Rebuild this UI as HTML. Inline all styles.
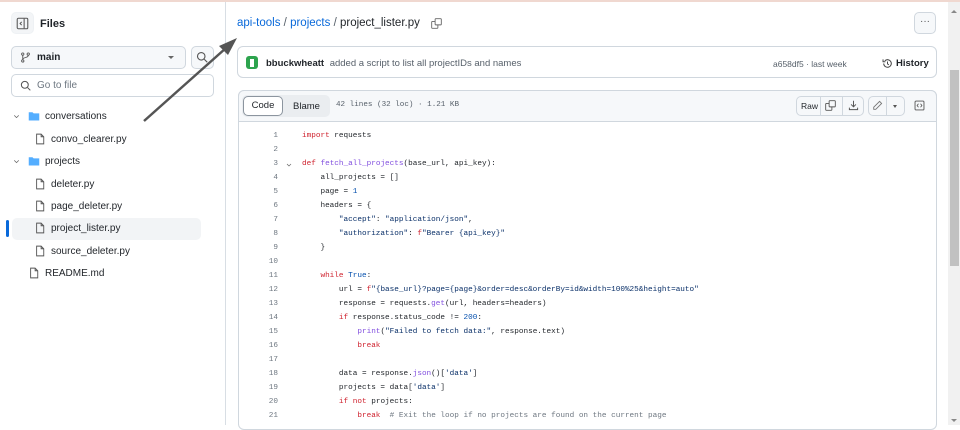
<!DOCTYPE html>
<html><head><meta charset="utf-8"><style>
*{box-sizing:border-box;margin:0;padding:0}
body{width:960px;height:425px;overflow:hidden;background:#fff;font-family:"Liberation Sans",sans-serif;color:#1f2328;position:relative}
.abs{position:absolute}
.topline{left:0;top:0;width:960px;height:2px;background:#f0d8d0}
.side{left:0;top:2px;width:226px;height:423px;border-right:1px solid #d8dee4}
.btn{border:1px solid #d0d7de;border-radius:5px;background:#f6f8fa}
.row{position:absolute;font-size:10px;color:#1f2328;height:22px;line-height:22px}
.mono{font-family:"Liberation Mono",monospace}
.code{font-family:"Liberation Mono",monospace;font-size:7.7px;white-space:pre;line-height:14px}
.ln{position:absolute;left:240px;width:38px;text-align:right;color:#6e7781}
.cl{position:absolute;left:302px;color:#1f2328}
.k{color:#cf222e}.f{color:#8250df}.c{color:#0550ae}.s{color:#0a3069}.cm{color:#6e7781}
</style></head><body>
<div class="abs topline"></div>
<div class="abs side"></div>
<div class="abs btn" style="left:11px;top:12px;width:23px;height:22px;border-color:#eef1f4;background:#f3f5f7"></div>
<svg class="abs" style="left:16px;top:17px" width="13" height="13" viewBox="0 0 16 16"><rect x="1.5" y="1.5" width="13" height="13" rx="1.5" fill="none" stroke="#555" stroke-width="1.3"/><line x1="10" y1="2" x2="10" y2="14" stroke="#555" stroke-width="1.3"/><path d="M7 6 L5 8 L7 10" fill="none" stroke="#555" stroke-width="1.2"/></svg>
<div class="abs" style="left:40px;top:18px;font-size:11px;font-weight:bold">Files</div>
<div class="abs btn" style="left:11px;top:46px;width:175px;height:23px"></div>
<svg class="abs" style="left:20px;top:52px" width="11" height="11" viewBox="0 0 16 16"><circle cx="4" cy="3" r="1.7" fill="none" stroke="#555" stroke-width="1.3"/><circle cx="4" cy="13" r="1.7" fill="none" stroke="#555" stroke-width="1.3"/><circle cx="12" cy="3" r="1.7" fill="none" stroke="#555" stroke-width="1.3"/><path d="M4 5v6M12 5c0 4-8 2-8 6" fill="none" stroke="#555" stroke-width="1.3"/></svg>
<div class="abs" style="left:37px;top:52px;font-size:10px;font-weight:bold">main</div>
<div class="abs" style="left:168px;top:56px;border:3px solid transparent;border-top:3px solid #666"></div>
<div class="abs btn" style="left:191px;top:46px;width:23px;height:23px"></div>
<svg class="abs" style="left:196px;top:51px" width="12" height="12" viewBox="0 0 16 16"><circle cx="7" cy="7" r="5" fill="none" stroke="#555" stroke-width="1.5"/><line x1="11" y1="11" x2="15" y2="15" stroke="#555" stroke-width="1.5"/></svg>
<div class="abs" style="left:11px;top:74px;width:203px;height:23px;border:1px solid #d0d7de;border-radius:5px"></div>
<svg class="abs" style="left:20px;top:80px" width="11" height="11" viewBox="0 0 16 16"><circle cx="7" cy="7" r="5" fill="none" stroke="#555" stroke-width="1.5"/><line x1="11" y1="11" x2="15" y2="15" stroke="#555" stroke-width="1.5"/></svg>
<div class="abs" style="left:37px;top:80px;font-size:10px;color:#6e7781">Go to file</div>
<div class="abs" style="left:12px;top:218px;width:189px;height:22px;background:#f2f4f6;border-radius:5px"></div>
<div class="abs" style="left:6px;top:220px;width:3px;height:17px;background:#0969da;border-radius:2px"></div>
<svg width="0" height="0" style="position:absolute"><defs>
<symbol id="fi" viewBox="0 0 16 16"><path d="M3.5 1.5h6l3.5 3.5v9.5h-9.5z M9.5 1.5v3.5h3.5" fill="none" stroke="#555" stroke-width="1.2"/></symbol>
<symbol id="fo" viewBox="0 0 16 16"><path d="M1 3h5l1.5 1.5H15V14H1z" fill="#54aeff"/></symbol>
<symbol id="ch" viewBox="0 0 16 16"><path d="M4 6l4 4 4-4" fill="none" stroke="#666" stroke-width="1.4"/></symbol>
</defs></svg>
<svg class="abs" style="left:12px;top:112px" width="9" height="9"><use href="#ch"/></svg>
<svg class="abs" style="left:28px;top:110px" width="12" height="12"><use href="#fo"/></svg>
<div class="row" style="left:45px;top:106px">conversations</div>
<svg class="abs" style="left:34px;top:133px" width="12" height="12"><use href="#fi"/></svg>
<div class="row" style="left:51px;top:129px">convo_clearer.py</div>
<svg class="abs" style="left:12px;top:157px" width="9" height="9"><use href="#ch"/></svg>
<svg class="abs" style="left:28px;top:155px" width="12" height="12"><use href="#fo"/></svg>
<div class="row" style="left:45px;top:151px">projects</div>
<svg class="abs" style="left:34px;top:178px" width="12" height="12"><use href="#fi"/></svg>
<div class="row" style="left:51px;top:174px">deleter.py</div>
<svg class="abs" style="left:34px;top:200px" width="12" height="12"><use href="#fi"/></svg>
<div class="row" style="left:51px;top:196px">page_deleter.py</div>
<svg class="abs" style="left:34px;top:222px" width="12" height="12"><use href="#fi"/></svg>
<div class="row" style="left:51px;top:218px">project_lister.py</div>
<svg class="abs" style="left:34px;top:245px" width="12" height="12"><use href="#fi"/></svg>
<div class="row" style="left:51px;top:241px">source_deleter.py</div>
<svg class="abs" style="left:28px;top:267px" width="12" height="12"><use href="#fi"/></svg>
<div class="row" style="left:45px;top:263px">README.md</div>
<div class="abs" style="left:237px;top:17px;font-size:11.5px"><span style="color:#0969da">api-tools</span> <span style="color:#57606a">/</span> <span style="color:#0969da">projects</span> <span style="color:#57606a">/</span> <span>project_lister.py</span></div>
<svg class="abs" style="left:431px;top:18px" width="11" height="11" viewBox="0 0 16 16"><rect x="1" y="5" width="9" height="10" rx="1" fill="none" stroke="#666" stroke-width="1.3"/><rect x="6" y="1" width="9" height="9" rx="1" fill="#fff" stroke="#666" stroke-width="1.3"/></svg>
<div class="abs btn" style="left:914px;top:12px;width:22px;height:22px;text-align:center;font-size:10px;line-height:18px;color:#555">···</div>
<div class="abs" style="left:237px;top:46px;width:700px;height:32px;border:1px solid #d0d7de;border-radius:6px"></div>
<div class="abs" style="left:246px;top:56px;width:12px;height:13px;background:#2da44e;border-radius:3px"></div>
<div class="abs" style="left:250px;top:59px;width:4px;height:8px;background:#fff"></div>
<div class="abs" style="left:266px;top:58px;font-size:9.5px"><b>bbuckwheatt</b> <span style="color:#57606a;margin-left:3px">added a script to list all projectIDs and names</span></div>
<div class="abs" style="left:773px;top:59px;font-size:8.5px;color:#57606a">a658df5 · last week</div>
<svg class="abs" style="left:882px;top:58px" width="11" height="11" viewBox="0 0 16 16"><path d="M2.5 8a5.5 5.5 0 1 0 1.6-3.9" fill="none" stroke="#444" stroke-width="1.5"/><path d="M1.5 2v3.5h3.5" fill="none" stroke="#444" stroke-width="1.4"/><path d="M8 5v3.5l2 1.5" fill="none" stroke="#444" stroke-width="1.4"/></svg>
<div class="abs" style="left:896px;top:58px;font-size:9.5px;font-weight:bold">History</div>
<div class="abs" style="left:238px;top:90px;width:699px;height:340px;border:1px solid #d0d7de;border-radius:6px"></div>
<div class="abs" style="left:238px;top:90px;width:699px;height:32px;background:#f6f8fa;border:1px solid #d0d7de;border-radius:6px 6px 0 0"></div>
<div class="abs" style="left:242px;top:95px;width:88px;height:22px;background:#eaedf0;border-radius:5px"></div>
<div class="abs" style="left:243px;top:96px;width:40px;height:20px;background:#fff;border:1px solid #8c959f;border-radius:5px;font-size:9.5px;text-align:center;line-height:18px">Code</div>
<div class="abs" style="left:293px;top:101px;font-size:9.5px;color:#1f2328">Blame</div>
<div class="abs mono" style="left:336px;top:101px;font-size:7.6px;color:#57606a">42 lines (32 loc) · 1.21 KB</div>
<div class="abs btn" style="left:796px;top:96px;width:68px;height:20px;background:#f6f8fa"></div>
<div class="abs" style="left:820px;top:96px;width:1px;height:20px;background:#d0d7de"></div>
<div class="abs" style="left:842px;top:96px;width:1px;height:20px;background:#d0d7de"></div>
<div class="abs" style="left:801px;top:101px;font-size:8.5px">Raw</div>
<svg class="abs" style="left:825px;top:100px" width="11" height="11" viewBox="0 0 16 16"><rect x="1" y="5" width="9" height="10" rx="1" fill="none" stroke="#555" stroke-width="1.3"/><rect x="6" y="1" width="9" height="9" rx="1" fill="#f6f8fa" stroke="#555" stroke-width="1.3"/></svg>
<svg class="abs" style="left:848px;top:100px" width="11" height="11" viewBox="0 0 16 16"><path d="M8 1v9M4.5 6.5L8 10l3.5-3.5M2 11v3h12v-3" fill="none" stroke="#555" stroke-width="1.4"/></svg>
<div class="abs btn" style="left:868px;top:96px;width:37px;height:20px"></div>
<div class="abs" style="left:886px;top:96px;width:1px;height:20px;background:#d0d7de"></div>
<svg class="abs" style="left:872px;top:100px" width="11" height="11" viewBox="0 0 16 16"><path d="M11 2l3 3-8.5 8.5H2.5v-3z" fill="none" stroke="#777" stroke-width="1.3"/></svg>
<div class="abs" style="left:893px;top:105px;border:2.5px solid transparent;border-top:3px solid #555"></div>
<svg class="abs" style="left:914px;top:100px" width="11" height="11" viewBox="0 0 16 16"><rect x="1.5" y="1.5" width="13" height="13" rx="1.5" fill="none" stroke="#555" stroke-width="1.3"/><path d="M6.5 5.5L4.5 8l2 2.5M9.5 5.5l2 2.5-2 2.5" fill="none" stroke="#555" stroke-width="1.2"/></svg>
<div class="code">
<div class="ln" style="top:129px">1</div><div class="cl" style="top:129px"><span class="k">import</span> requests</div>
<div class="ln" style="top:143px">2</div>
<div class="ln" style="top:157px">3</div><div class="cl" style="top:157px"><span class="k">def</span> <span class="f">fetch_all_projects</span>(base_url, api_key):</div>
<div class="ln" style="top:171px">4</div><div class="cl" style="top:171px">    all_projects = []</div>
<div class="ln" style="top:185px">5</div><div class="cl" style="top:185px">    page = <span class="c">1</span></div>
<div class="ln" style="top:199px">6</div><div class="cl" style="top:199px">    headers = {</div>
<div class="ln" style="top:213px">7</div><div class="cl" style="top:213px">        <span class="s">"accept"</span>: <span class="s">"application/json"</span>,</div>
<div class="ln" style="top:227px">8</div><div class="cl" style="top:227px">        <span class="s">"authorization"</span>: <span class="k">f</span><span class="s">"Bearer {api_key}"</span></div>
<div class="ln" style="top:241px">9</div><div class="cl" style="top:241px">    }</div>
<div class="ln" style="top:255px">10</div>
<div class="ln" style="top:269px">11</div><div class="cl" style="top:269px">    <span class="k">while</span> <span class="c">True</span>:</div>
<div class="ln" style="top:283px">12</div><div class="cl" style="top:283px">        url = <span class="k">f</span><span class="s">"{base_url}?page={page}&amp;order=desc&amp;orderBy=id&amp;width=100%25&amp;height=auto"</span></div>
<div class="ln" style="top:297px">13</div><div class="cl" style="top:297px">        response = requests.<span class="f">get</span>(url, headers=headers)</div>
<div class="ln" style="top:311px">14</div><div class="cl" style="top:311px">        <span class="k">if</span> response.status_code != <span class="c">200</span>:</div>
<div class="ln" style="top:325px">15</div><div class="cl" style="top:325px">            <span class="f">print</span>(<span class="s">"Failed to fetch data:"</span>, response.text)</div>
<div class="ln" style="top:339px">16</div><div class="cl" style="top:339px">            <span class="k">break</span></div>
<div class="ln" style="top:353px">17</div>
<div class="ln" style="top:367px">18</div><div class="cl" style="top:367px">        data = response.<span class="f">json</span>()[<span class="s">'data'</span>]</div>
<div class="ln" style="top:381px">19</div><div class="cl" style="top:381px">        projects = data[<span class="s">'data'</span>]</div>
<div class="ln" style="top:395px">20</div><div class="cl" style="top:395px">        <span class="k">if</span> <span class="k">not</span> projects:</div>
<div class="ln" style="top:409px">21</div><div class="cl" style="top:409px">            <span class="k">break</span>  <span class="cm"># Exit the loop if no projects are found on the current page</span></div>
</div>
<svg class="abs" style="left:285px;top:161px" width="8" height="8"><use href="#ch"/></svg>
<div class="abs" style="left:948px;top:2px;width:12px;height:423px;background:#f1f1f1"></div>
<div class="abs" style="left:950px;top:70px;width:9px;height:196px;background:#c1c1c1"></div>
<div class="abs" style="left:951px;top:7px;border:3px solid transparent;border-bottom:3px solid #888"></div>
<div class="abs" style="left:951px;top:419px;border:3px solid transparent;border-top:3px solid #888"></div>
<svg class="abs" style="left:0;top:0" width="260" height="140"><line x1="144" y1="121" x2="226" y2="48" stroke="#555" stroke-width="2.5"/><path d="M237 38 L219 46 L228 55 Z" fill="#555"/></svg>
</body></html>
